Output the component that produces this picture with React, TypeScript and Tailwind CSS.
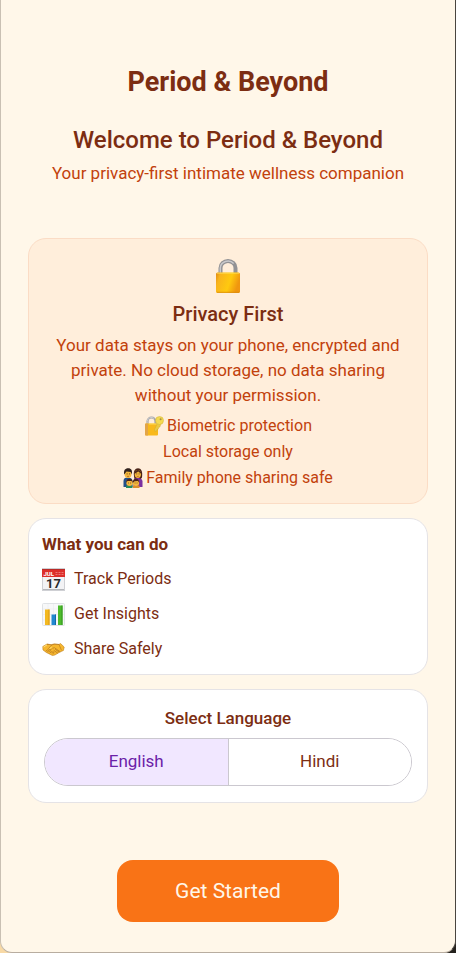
import { useState } from 'react';
import type { ReactNode } from 'react';

function LockIcon() {
	return (
		<svg viewBox="0 0 24 34" className="h-[34px] w-6" aria-hidden="true">
			<defs>
				<linearGradient id="lock-body" x1="0" x2="1" y1="0" y2="0.3">
					<stop offset="0" stopColor="#e08a14" />
					<stop offset="0.2" stopColor="#f9b41c" />
					<stop offset="0.65" stopColor="#ffc90f" />
					<stop offset="1" stopColor="#f0960f" />
				</linearGradient>
			</defs>
			<path d="M4.5 15V9a7.500 7 0 0 1 15 0v6" fill="none" stroke="#929295" strokeWidth="4" />
			<path d="M4.300 14V9a7.700 7.200 0 0 1 13.400-4.600" fill="none" stroke="#c9c9cc" strokeWidth="1.500" />
			<rect x="0" y="13.500" width="24" height="20.500" rx="1.500" fill="url(#lock-body)" />
			<path d="M1 14.200h22" stroke="#ffdf5a" strokeWidth="0.800" />
			<path d="M1 33.300h22" stroke="#d98a10" strokeWidth="0.800" />
		</svg>
	);
}

function LockKeyIcon() {
	return (
		<svg viewBox="0 0 20 20" className="size-5" aria-hidden="true">
			<path d="M3.500 9V5.500a4 4 0 0 1 8 0V9" fill="none" stroke="#a2a3a7" strokeWidth="2.200" />
			<path d="M3.200 8V5.500a4.200 4.200 0 0 1 7-3" fill="none" stroke="#d5d6d9" strokeWidth="0.8" />
			<rect x="1" y="7.500" width="13" height="12" rx="1" fill="#f9b91b" />
			<path d="M1 8.500a1 1 0 0 1 1-1h2v12H2a1 1 0 0 1-1-1z" fill="#e3a547" />
			<path d="M5 8h8.500" stroke="#ffdc58" />
			<path d="m14 6-3.500 7.500.4 2 1.800-.5.4-1.500 1.200-.4.4-1.600 1.200-.5L17 7.500z" fill="#ecc93f" stroke="#c9a62e" strokeWidth="0.4" />
			<circle cx="15.500" cy="4.500" r="4" fill="#f4da50" stroke="#d0b03a" strokeWidth="0.5" />
			<circle cx="16.600" cy="3.200" r="1" fill="#a89046" />
		</svg>
	);
}

function FamilyIcon() {
	return (
		<svg viewBox="0 0 20 20" className="size-5" aria-hidden="true">
			<path d="M11 8c-.8-5 1-7.800 4-7.800S20 3 19 9.500l-1.500 2h-6z" fill="#4b2519" />
			<path d="M.5 19v-6c0-2.500 1.500-3.500 4-3.500s5 1 5 3.500v6z" fill="#234f88" />
			<path d="M10.500 19v-6c0-2 1.500-3 4-3s5 1 5 3.500V19z" fill="#7b2fa0" />
			<ellipse cx="5" cy="6" rx="3.500" ry="4" fill="#f5b83d" />
			<ellipse cx="14.800" cy="6" rx="3.200" ry="4" fill="#f5b83d" />
			<path d="M1.200 6.500C.5 2.500 2 .3 5.200.3S9.500 2.500 8.800 6.500L7.700 4 3.500 3.500z" fill="#30211d" />
			<path d="M11.300 6c.2-3 1.500-4 3.500-4s3.400 1.500 3.500 4l-3-2.500z" fill="#4b2519" />
			<path d="M3.700 5.900h.8m1.500 0h.8m6.600 0h.8m1.500 0h.8" stroke="#3b2519" strokeWidth="0.9" />
			<path d="M4 8.200q1 .7 2 0m7.800 0q1 .7 2 0" fill="none" stroke="#9b3c18" strokeWidth="0.600" />
			<path d="M3 20v-2.500h6.500V20z" fill="#278a5b" />
			<path d="M10 20v-2.500h6.500V20z" fill="#dc8d2c" />
			<circle cx="6.500" cy="14.800" r="3.200" fill="#f5b83d" />
			<circle cx="13" cy="14.800" r="3.200" fill="#f5b83d" />
			<path d="M3.200 15c0-3 1.200-4.300 3.300-4.300s3.200 1.300 3.200 4.300L8.500 13h-4zM9.800 15c0-3 1.200-4.300 3.200-4.300s3.300 1.300 3.300 4.300L15 13l-3.500.2z" fill="#4b2519" />
			<path d="M5.200 15h.7m1.300 0h.7m3.800 0h.7m1.300 0h.7" stroke="#3b2519" strokeWidth="0.8" />
		</svg>
	);
}

function CalendarIcon() {
	return (
		<svg viewBox="0 0 23 23" className="size-[23px]" aria-hidden="true">
			<rect x="0.500" y="0.500" width="22" height="22" fill="#f3f3f5" stroke="#cfd0d4" />
			<path d="M0 1h23v8H0z" fill="#dd2f2b" />
			<path d="M0 1h23v1H0z" fill="#b92b28" />
			<path d="M1 21.500h21" stroke="#b5b7bb" />
			<path d="M13.500 4.500h2m1 0h2m1 0h2M13.500 6.500h2m1 0h2m1 0h2" stroke="#ee8a85" strokeWidth="0.800" />
			<text x="1.500" y="8" fontSize="6" fontWeight="700" fill="#fff">JUL</text>
			<text x="11.500" y="19.500" textAnchor="middle" fontSize="13" fontWeight="700" fill="#29292b">17</text>
		</svg>
	);
}

function ChartIcon() {
	return (
		<svg viewBox="0 0 23 23" className="size-[23px]" aria-hidden="true">
			<rect x="0.500" y="0.500" width="22" height="22" rx="1" fill="#f7f8f9" stroke="#dfe2e5" />
			<path d="M1 6h21M1 11.500h21M1 17h21M6 1v21M11.500 1v21M17 1v21" stroke="#e6e9ed" strokeWidth="0.500" />
			<path d="M3 6.500h4.500V22H3z" fill="#f3b921" />
			<path d="M9.500 11.500H14V22H9.500z" fill="#2188d0" />
			<path d="M16 2.500h4.500V22H16z" fill="#4dbb2c" />
			<path d="M6.500 6.500h1V22h-1z" fill="#dc9a15" />
			<path d="M13 11.500h1V22h-1z" fill="#126aa9" />
			<path d="M19.500 2.500h1V22h-1z" fill="#32951f" />
		</svg>
	);
}

function HandshakeIcon() {
	return (
		<svg viewBox="0 0 23 23" className="size-[23px]" aria-hidden="true">
			<path d="M.8 8.500 5 6l4 .7 3-.7 5 .5 1.500-1 3.700 3.500-.8 3.500-3.500 1.500-5 3-2.500.5-6-3L1 12z" fill="#f6b72f" stroke="#bf801c" strokeWidth="0.600" />
			<path d="m5 6.300 4.500.8-3 3.500c.6 1.500 2.500 1.200 4-.5l2-.3 5.800 4" fill="#ffcf50" stroke="#b0701a" strokeWidth="0.700" strokeLinejoin="round" />
			<path d="m9.500 7.100 3-1 4.500.4 2.500 5.800" fill="none" stroke="#b0701a" strokeWidth="0.600" />
			<path d="m4 13 1.800-1.300 1 .8-1.500 1.600m1.700-.5 1.500-1 .8 1-1.500 1.500m2-.5 1.500-.9.700 1-1.200 1M12 12.500l3.500 2.500m-2-3.500 3.500 2.500" fill="none" stroke="#b0701a" strokeWidth="0.700" strokeLinecap="round" />
			<path d="M1.500 9 5 6.900" stroke="#ffdf7c" />
		</svg>
	);
}

const features = [
	{ icon: <CalendarIcon />, label: 'Track Periods' },
	{ icon: <ChartIcon />, label: 'Get Insights' },
	{ icon: <HandshakeIcon />, label: 'Share Safely' },
];

const languages = ['English', 'Hindi'];

function PrivacyItem({ icon, children }: { icon?: ReactNode; children: ReactNode }) {
	return (
		<li className="flex items-center justify-center gap-[3px]">
			{icon}
			<span>{children}</span>
		</li>
	);
}

export default function App() {
	const [language, setLanguage] = useState('English');

	return (
		<div className="flex min-h-screen flex-col bg-linear-to-r from-[#f8d9a5] from-80% to-[#24211d] to-95% font-['Roboto',sans-serif] text-[#7c2d12]">
			<main className="mb-px flex grow flex-col rounded-b-xl border-x border-b border-l-[#c9c0b3] border-r-[#4a4640] border-b-[#b8ada0] bg-[#fff7e9] px-[27px] pt-16 pb-[30px]">
				<header className="text-center">
					<h1 className="text-[27px] leading-9 font-bold">Period &amp; Beyond</h1>
					<h2 className="mt-6 text-2xl leading-8 font-medium">Welcome to Period &amp; Beyond</h2>
					<p className="mt-[5px] text-[17px] leading-6 text-[#c2410c]">
						Your privacy-first intimate wellness companion
					</p>
				</header>

				<div className="mt-[53px] flex flex-col gap-3.5">
					<section className="flex flex-col items-center rounded-[18px] border border-[#fbdcc5] bg-[#ffeedb] px-5 pt-5 pb-3 text-center">
						<LockIcon />
						<h3 className="mt-[9px] text-xl leading-6 font-medium">Privacy First</h3>
						<p className="mt-[7px] text-[17px] leading-[25px] text-[#c2410c]">
							Your data stays on your phone, encrypted and private. No cloud storage, no data sharing
							without your permission.
						</p>
						<ul className="mt-[5px] text-base leading-[26px] text-[#c2410c]">
							<PrivacyItem icon={<LockKeyIcon />}>Biometric protection</PrivacyItem>
							<PrivacyItem>Local storage only</PrivacyItem>
							<PrivacyItem icon={<FamilyIcon />}>Family phone sharing safe</PrivacyItem>
						</ul>
					</section>

					<section className="rounded-[18px] border border-[#e5e3e6] bg-white p-[13px]">
						<h3 className="text-[17px] leading-6 font-bold">What you can do</h3>
						<ul className="mt-[11px] flex flex-col gap-[11px]">
							{features.map((feature) => (
								<li key={feature.label} className="flex items-center gap-[9px]">
									{feature.icon}
									<span className="text-base leading-6">{feature.label}</span>
								</li>
							))}
						</ul>
					</section>

					<section className="rounded-[18px] border border-[#e5e3e6] bg-white px-[15px] py-4 text-center">
						<h3 id="language-label" className="text-[17px] leading-6 font-medium">
							Select Language
						</h3>
						<div
							role="group"
							aria-labelledby="language-label"
							className="mt-2 flex h-12 divide-x divide-[#cbc8cf] overflow-hidden rounded-full border border-[#cbc8cf]"
						>
							{languages.map((name) => (
								<button
									key={name}
									type="button"
									aria-pressed={language === name}
									onClick={() => setLanguage(name)}
									className={
										language === name
											? 'flex-1 bg-[#f1e7ff] text-[17px] text-[#6b21a8]'
											: 'flex-1 bg-white text-[17px] text-[#7c2d12]'
									}
								>
									{name}
								</button>
							))}
						</div>
					</section>
				</div>

				<button
					type="button"
					className="mt-[57px] self-center rounded-2xl bg-[#f97316] px-[58px] py-[17px] text-[21px] leading-7 text-[#fff7e9]"
				>
					Get Started
				</button>
			</main>
		</div>
	);
}
